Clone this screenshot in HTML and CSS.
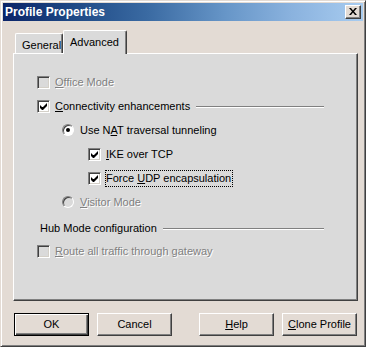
FILE: index.html
```html
<!DOCTYPE html>
<html>
<head>
<meta charset="utf-8">
<link rel="stylesheet" href="styles.css">
</head>
<body>
<div class="window">
  <div class="titlebar">
    <span class="title">Profile Properties</span>
    <span class="close"><svg width="8" height="7" viewBox="0 0 8 7"><path d="M0 0h2l2 2.5 2-2.5h2l-3 3.5 3 3.5h-2l-2-2.5-2 2.5h-2l3-3.5z" fill="#000"/></svg></span>
  </div>
  <div class="tabs">
    <div class="tab">General</div>
    <div class="tab active">Advanced</div>
  </div>
  <div class="panel">
    <div class="row lvl0 disabled"><span class="cb"></span><span class="lbl"><u>O</u>ffice Mode</span></div>
    <div class="row lvl0"><span class="cb"><svg width="7" height="7" viewBox="0 0 7 7"><path d="M0 2v3l2 2h1l4-4v-3l-4 4h-1z" fill="#000"/></svg></span><span class="lbl"><u>C</u>onnectivity enhancements</span><span class="rule"></span></div>
    <div class="row lvl1"><span class="rb"><span class="dot"></span></span><span class="lbl">Use N<u>A</u>T traversal tunneling</span></div>
    <div class="row lvl2"><span class="cb"><svg width="7" height="7" viewBox="0 0 7 7"><path d="M0 2v3l2 2h1l4-4v-3l-4 4h-1z" fill="#000"/></svg></span><span class="lbl"><u>I</u>KE over TCP</span></div>
    <div class="row lvl2"><span class="cb"><svg width="7" height="7" viewBox="0 0 7 7"><path d="M0 2v3l2 2h1l4-4v-3l-4 4h-1z" fill="#000"/></svg></span><span class="lbl focus">Force <u>U</u>DP encapsulation</span></div>
    <div class="row lvl1 disabled"><span class="rb"></span><span class="lbl"><u>V</u>isitor Mode</span></div>
    <div class="row group"><span class="glbl">Hub Mode configuration</span><span class="rule"></span></div>
    <div class="row lvl0 disabled"><span class="cb"></span><span class="lbl"><u>R</u>oute all traffic through gateway</span></div>
  </div>
  <div class="buttons">
    <div class="btn default"><span>OK</span></div>
    <div class="btn"><span>Cancel</span></div>
    <div class="btn push"><span><u>H</u>elp</span></div>
    <div class="btn"><span><u>C</u>lone Profile</span></div>
  </div>
</div>
</body>
</html>
```

FILE: styles.css
```css
* { box-sizing: border-box; }
html, body { margin: 0; padding: 0; }
body {
  font-family: "Liberation Sans", Arial, sans-serif;
  font-size: 11px;
  color: #000;
  background: #e3dbd4;
}
u { text-decoration: underline; text-underline-offset: 1px; }

.window {
  width: 366px;
  height: 347px;
  background: #e3dbd4;
  border: 1px solid;
  border-color: #e3dbd4 #404040 #404040 #e3dbd4;
  box-shadow: inset 1px 1px #fff, inset -1px -1px #808080;
  padding: 2px;
  display: flex;
  flex-direction: column;
}

.titlebar {
  height: 18px;
  display: flex;
  align-items: center;
  justify-content: space-between;
  padding: 0 2px 0 2px;
  background: linear-gradient(to right, #0b2468 0%, #1f4a86 20%, #3a6aa2 40%, #6796c8 62%, #8ab2de 80%, #a8ccf0 100%);
}
.title {
  color: #fff;
  font-weight: bold;
  font-size: 12px;
  letter-spacing: 0;
}
.close {
  width: 16px;
  height: 14px;
  background: #e3dbd4;
  border: 1px solid;
  border-color: #fff #404040 #404040 #fff;
  box-shadow: inset -1px -1px #808080;
  display: flex;
  align-items: center;
  justify-content: center;
  padding: 0 1px 1px 0;
}
.close svg { display: block; }

.tabs {
  display: flex;
  align-items: flex-end;
  margin: 9px 0 0 10px;
  height: 23px;
}
.tab {
  position: relative;
  background: #dadada;
  border: 1px solid;
  border-bottom: none;
  border-color: #fff #404040 #404040 #fff;
  box-shadow: inset -1px 0 #808080;
  border-radius: 2px 2px 0 0;
  display: flex;
  align-items: center;
  padding: 0 0 0 5px;
}
.tab:first-child {
  margin-left: 2px;
  width: 48px;
  height: 20px;
  padding-left: 6px;
  padding-top: 2px;
}
.tab.active {
  width: 64px;
  height: 24px;
  margin-bottom: -1px;
  z-index: 1;
  padding-left: 6px;
  padding-bottom: 2px;
}

.panel {
  margin-left: 10px;
  width: 345px;
  height: 248px;
  background: #dadada;
  border: 1px solid;
  border-color: #fff #404040 #404040 #fff;
  box-shadow: inset -1px -1px #808080;
  padding: 16px 33px 0 23px;
  display: flex;
  flex-direction: column;
}

.row {
  height: 24px;
  display: flex;
  align-items: center;
}
.lvl1 { padding-left: 25px; }
.lvl2 { padding-left: 51px; }
.group { margin-top: 3px; height: 22px; padding-left: 3px; }

.cb {
  width: 13px;
  height: 13px;
  flex: none;
  background: #fff;
  border: 1px solid;
  border-color: #808080 #fff #fff #808080;
  box-shadow: inset 1px 1px #404040, inset -1px -1px #d4d0c8;
  display: flex;
  align-items: center;
  justify-content: center;
}
.cb svg { display: block; }
.rb {
  width: 12px;
  height: 12px;
  flex: none;
  border-radius: 50%;
  background: #fff;
  border: 1px solid;
  border-color: #808080 #fff #fff #808080;
  box-shadow: inset 1px 1px #404040;
  display: flex;
  align-items: center;
  justify-content: center;
}
.dot {
  width: 4px;
  height: 4px;
  border-radius: 50%;
  background: #000;
}
.disabled .cb, .disabled .rb { background: #dadada; }
.disabled .lbl {
  color: #808080;
  text-shadow: 1px 1px #fff;
}

.lbl { margin-left: 5px; white-space: nowrap; line-height: 15px; }
.lvl1 .lbl { margin-left: 6px; }
.lbl.focus {
  margin-left: 4px;
  border: 1px dotted #000;
  padding: 0 1px 0 0;
  line-height: 15px;
}
.glbl { white-space: nowrap; }

.rule {
  flex: 1;
  height: 2px;
  margin-left: 6px;
  border-top: 1px solid #808080;
  border-bottom: 1px solid #fff;
  margin-top: 2px;
}

.buttons {
  display: flex;
  margin: 12px 0 0 11px;
  gap: 8px;
}
.btn {
  width: 75px;
  height: 23px;
  background: #e3dbd4;
  border: 1px solid;
  border-color: #fff #404040 #404040 #fff;
  box-shadow: inset -1px -1px #808080;
  display: flex;
  align-items: center;
  justify-content: center;
  padding-bottom: 1px;
}
.btn.default {
  border: 1px solid #000;
  box-shadow: inset 1px 1px #fff, inset -1px -1px #404040, inset -2px -2px #808080;
}
.btn.push { margin-left: 19px; }
```
